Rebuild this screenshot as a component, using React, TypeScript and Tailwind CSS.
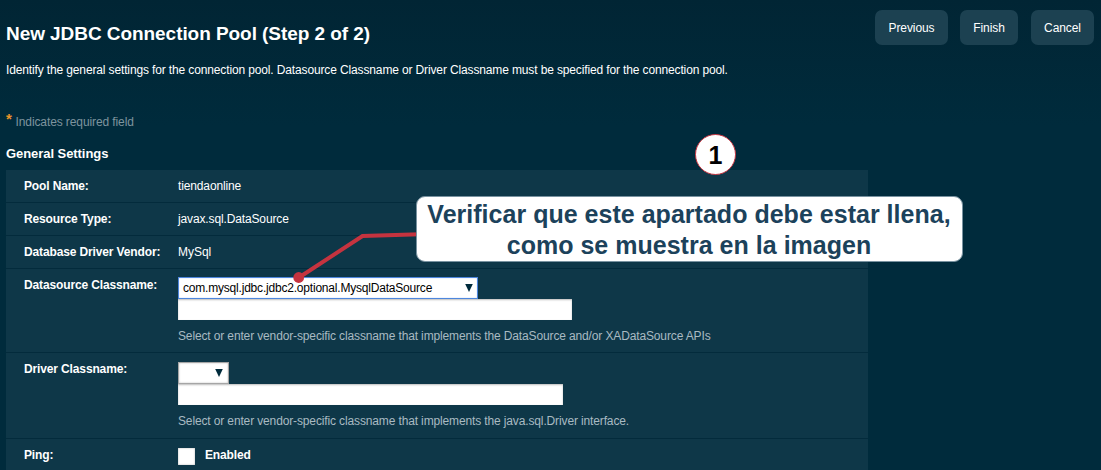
import type { ReactNode } from "react";

function Row({ label, children, className }: { label: string; children: ReactNode; className: string }) {
  return (
    <div className={`flex shrink-0 border-b border-[#032b3c] bg-[#0e3748] pl-[18px] ${className}`}>
      <div className="w-[154px] shrink-0 whitespace-nowrap pt-2 font-bold">{label}</div>
      <div className="flex flex-col items-start">{children}</div>
    </div>
  );
}

function Arrow() {
  return (
    <svg width="8" height="8" viewBox="0 0 8 8" className="shrink-0">
      <path d="M0.2 0H7.8L4 8Z" fill="#002b3c" />
    </svg>
  );
}

function ActionButton({ label, className }: { label: string; className: string }) {
  return (
    <button className={`h-[35px] rounded-[7px] bg-[#1c4151] text-center text-xs text-white ${className}`}>
      {label}
    </button>
  );
}

const field = "h-[21px] bg-white shadow-[inset_0_1px_2px_#bbb] outline-none";

export default function App() {
  return (
    <div className="relative flex h-[470px] w-[1101px] flex-col overflow-hidden bg-[#002b3c] bg-[linear-gradient(#012534_0px,#002b3c_125px)] font-['Liberation_Sans',Arial,sans-serif] text-xs leading-4 tracking-[-0.135px] text-white">
      <header className="flex h-[60px] shrink-0 items-start justify-between pl-1.5 pr-[7px] pt-2.5">
        <h1 className="mt-3 whitespace-nowrap text-[19px] font-bold leading-6 tracking-[-0.06px]">
          New JDBC Connection Pool (Step 2 of 2)
        </h1>
        <div className="flex tracking-[-0.08px]">
          <ActionButton label="Previous" className="w-[73px]" />
          <ActionButton label="Finish" className="ml-3 w-[58px]" />
          <ActionButton label="Cancel" className="ml-[13px] w-[63px]" />
        </div>
      </header>
      <p className="ml-1.5 mt-[2px] whitespace-nowrap">
        Identify the general settings for the connection pool. Datasource Classname or Driver Classname must be
        specified for the connection pool.
      </p>
      <p className="ml-1.5 mt-9 flex h-4 whitespace-nowrap tracking-[-0.1px] text-[#7e949e]">
        <span className="-mt-[3px] mr-[3.5px] w-[6px] text-[15px] font-bold text-[#e8932a]">*</span>
        Indicates required field
      </p>
      <h2 className="ml-1.5 mt-4 h-[24px] shrink-0 text-[13px] font-bold leading-4 tracking-[-0.06px]">General Settings</h2>

      <section className="ml-1.5 flex w-[862px] flex-col">
        <Row label="Pool Name:" className="h-[33px]">
          <span className="pt-2">tiendaonline</span>
        </Row>
        <Row label="Resource Type:" className="h-[33px]">
          <span className="pt-2">javax.sql.DataSource</span>
        </Row>
        <Row label="Database Driver Vendor:" className="h-[33px]">
          <span className="pt-2 tracking-[-0.04px]">MySql</span>
        </Row>
        <Row label="Datasource Classname:" className="h-[84px]">
          <button className="mt-2 flex h-[22px] w-[300px] items-center justify-between border border-[#4d86dd] bg-white pl-1 pr-[4px] text-xs tracking-[-0.2px] text-black shadow-[inset_0_0_1px_#6ea0ee]">
            <span>com.mysql.jdbc.jdbc2.optional.MysqlDataSource</span>
            <Arrow />
          </button>
          <input className={`${field} w-[394px]`} />
          <span className="mt-2 whitespace-nowrap text-[#a9bac2]">
            Select or enter vendor-specific classname that implements the DataSource and/or XADataSource APIs
          </span>
        </Row>
        <Row label="Driver Classname:" className="h-[86px]">
          <button className="mt-[9px] flex h-[22px] w-[51px] items-center justify-end border border-[#a5a5a5] bg-white pb-px pr-[5px] shadow-[inset_0_0_2px_#bbb]">
            <Arrow />
          </button>
          <input className={`${field} w-[385px]`} />
          <span className="mt-2 whitespace-nowrap text-[#a9bac2]">
            Select or enter vendor-specific classname that implements the java.sql.Driver interface.
          </span>
        </Row>
        <Row label="Ping:" className="h-[33px]">
          <label className="flex items-start font-bold">
            <input type="checkbox" className="mt-[9px] size-[17px] appearance-none bg-white shadow-[inset_0_0_2px_#aaa]" />
            <span className="ml-[10px] pt-2">Enabled</span>
          </label>
        </Row>
      </section>

      <svg className="absolute left-[290px] top-[228px]" width="130" height="58" viewBox="0 0 130 58">
        <path d="M9 49.5L72.5 8L130 6.3" fill="none" stroke="#c5333f" strokeWidth="4" />
        <circle cx="8.7" cy="49.5" r="5.4" fill="#c5333f" />
      </svg>
      <div className="absolute left-[415.5px] top-[196px] flex h-[66px] w-[547px] flex-col items-center justify-center rounded-[9px] border border-[#7892a0] bg-white pt-0.5 text-center text-[25px] font-bold leading-[31px] tracking-[0.02px] text-[#1c425b]">
        <span className="whitespace-nowrap">Verificar que este apartado debe estar llena,</span>
        <span className="whitespace-nowrap">como se muestra en la imagen</span>
      </div>
      <div className="absolute left-[695px] top-[134px] flex size-[41px] items-center justify-center rounded-full border border-[#c5333f] bg-white text-[25px] font-bold text-black">
        1
      </div>
    </div>
  );
}
